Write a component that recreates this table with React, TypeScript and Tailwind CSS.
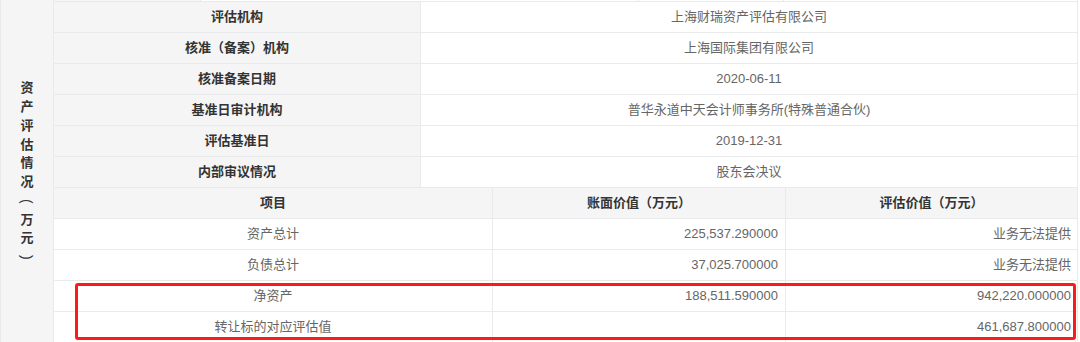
import React from "react";

const info = [
  { label: "评估机构", value: "上海财瑞资产评估有限公司" },
  { label: "核准（备案）机构", value: "上海国际集团有限公司" },
  { label: "核准备案日期", value: "2020-06-11" },
  { label: "基准日审计机构", value: "普华永道中天会计师事务所(特殊普通合伙)" },
  { label: "评估基准日", value: "2019-12-31" },
  { label: "内部审议情况", value: "股东会决议" },
];

const rows = [
  { item: "资产总计", book: "225,537.290000", appraised: "业务无法提供" },
  { item: "负债总计", book: "37,025.700000", appraised: "业务无法提供" },
  { item: "净资产", book: "188,511.590000", appraised: "942,220.000000" },
  { item: "转让标的对应评估值", book: "", appraised: "461,687.800000" },
];

const sideTitle = ["资", "产", "评", "估", "情", "况", "(", "万", "元", ")"];

export default function App() {
  return (
    <div className="relative w-[1080px] h-[342px] overflow-hidden bg-white text-[13px] text-[#666] [font-family:'Liberation_Sans','Noto_Sans_CJK_SC',sans-serif]">
      <div className="flex w-[1078px] h-[342px]">
        {/* rowspan title column, written top to bottom */}
        <div className="w-[54px] shrink-0 flex items-center justify-center border-x border-[#e8eaec] bg-[#f5f5f5]">
          <div className="flex flex-col items-center font-bold text-[#333] leading-[18.75px] pt-[4px]">
            {sideTitle.map((ch, i) =>
              ch === "(" || ch === ")" ? (
                <span
                  key={i}
                  className="flex items-center justify-center w-[16px] h-[18.75px] font-normal text-[14px] [transform:rotate(90deg)]"
                >
                  {ch}
                </span>
              ) : (
                <span key={i}>{ch}</span>
              )
            )}
          </div>
        </div>

        <div className="flex-1 flex flex-col border-r border-[#e8eaec]">
          {/* cut-off row above */}
          <div className="flex h-px shrink-0">
            <div className="w-[147px] border-r border-[#e8eaec] bg-[#f5f5f5]" />
            <div className="w-[438px] border-r border-[#e8eaec]" />
            <div className="w-[145px] border-r border-[#e8eaec]" />
            <div className="flex-1" />
          </div>

          {info.map((r) => (
            <div key={r.label} className="flex h-[31px] shrink-0 border-t border-[#e8eaec]">
              <div className="w-[367px] shrink-0 flex items-center justify-center border-r border-[#e8eaec] bg-[#f5f5f5] font-bold text-[#333]">
                {r.label}
              </div>
              <div className="flex-1 flex items-center justify-center">{r.value}</div>
            </div>
          ))}

          {/* table header */}
          <div className="flex h-[31px] shrink-0 border-t border-[#e8eaec] bg-[#f5f5f5] font-bold text-[#333]">
            <div className="w-[439px] shrink-0 flex items-center justify-center border-r border-[#e8eaec]">项目</div>
            <div className="w-[293px] shrink-0 flex items-center justify-center border-r border-[#e8eaec]">账面价值（万元）</div>
            <div className="flex-1 flex items-center justify-center">评估价值（万元）</div>
          </div>

          {rows.map((r) => (
            <div key={r.item} className="flex h-[31px] shrink-0 border-t border-[#e8eaec]">
              <div className="w-[439px] shrink-0 flex items-center justify-center border-r border-[#e8eaec]">{r.item}</div>
              <div className="w-[293px] shrink-0 flex items-center justify-end pr-[7px] border-r border-[#e8eaec]">{r.book}</div>
              <div className="flex-1 flex items-center justify-end pr-[6px]">{r.appraised}</div>
            </div>
          ))}
        </div>
      </div>

      {/* highlight annotation */}
      <div className="absolute left-[75px] top-[283px] w-[1001px] h-[57px] border-[3px] border-[#ff1a1a] rounded-[3px]" />
    </div>
  );
}
